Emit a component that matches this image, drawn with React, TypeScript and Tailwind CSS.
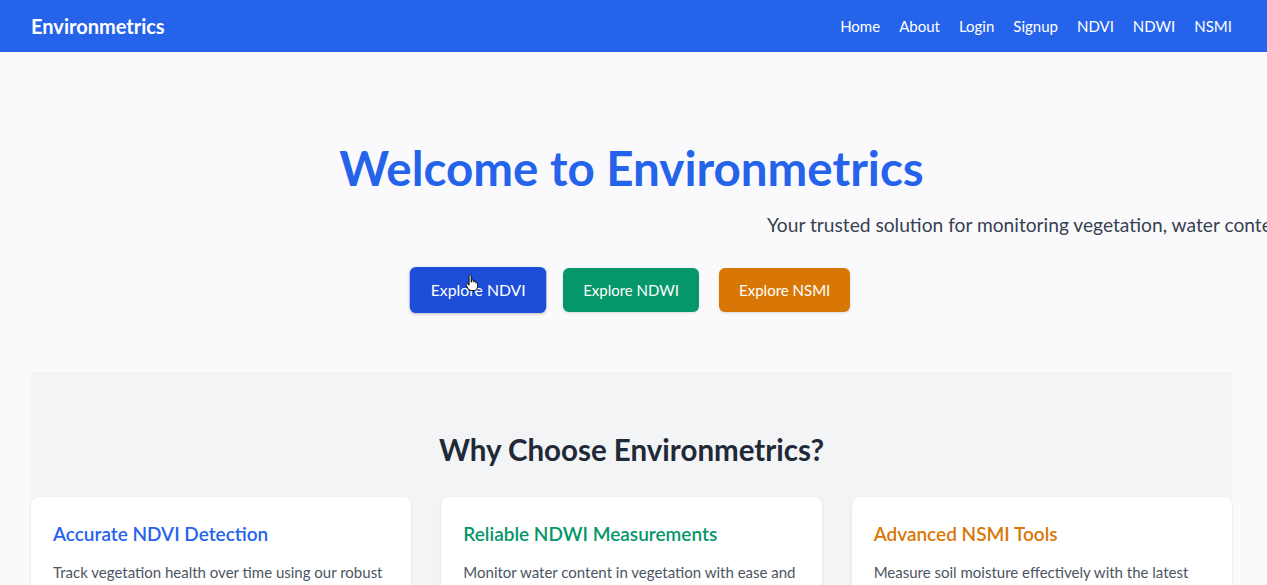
import React from "react";

const links = ["Home", "About", "Login", "Signup", "NDVI", "NDWI", "NSMI"];

const features = [
  {
    title: "Accurate NDVI Detection",
    color: "text-[#2563eb]",
    text: "Track vegetation health over time using our robust NDVI analysis tools powered by satellite imagery.",
  },
  {
    title: "Reliable NDWI Measurements",
    color: "text-[#059669]",
    text: "Monitor water content in vegetation with ease and precision using our NDWI measurement features.",
  },
  {
    title: "Advanced NSMI Tools",
    color: "text-[#d97706]",
    text: "Measure soil moisture effectively with the latest NSMI techniques for better land management.",
  },
];

const HandCursor = () => (
  <svg
    className="absolute left-[53px] top-[7px] pointer-events-none"
    width="12"
    height="17"
    viewBox="0 0 12 17"
  >
    <path
      d="M3.5 1.5a1 1 0 0 1 2 0v6h.5v-1.2a1 1 0 0 1 2 0v1.2a1 1 0 0 1 2 0v1a.9.9 0 0 1 1.6 0V12q0 3.5-3 3.5H5.5q-2 0-3-2L.8 10.3a1 1 0 0 1 1.6-1.1L3.5 10.5Z"
      fill="#fff"
      stroke="#000"
      strokeWidth="0.9"
      strokeLinejoin="round"
    />
  </svg>
);

export default function App() {
  return (
    <div
      className="min-h-screen bg-[#fafafc] overflow-x-hidden"
      style={{ fontFamily: 'Lato, "Noto Sans", sans-serif' }}
    >
      <nav className="bg-[#2563eb] h-[52px] flex items-center justify-between pl-[31px] pr-[35px]">
        <span className="text-white text-xl font-bold">Environmetrics</span>
        <ul className="flex gap-[19px] text-white text-[15px]">
          {links.map((l) => (
            <li key={l}>
              <a href="#">{l}</a>
            </li>
          ))}
        </ul>
      </nav>

      <main className="ml-[31px] mr-[35px]">
        <section className="pt-[92px] pb-[60px] text-center">
          <h1 className="text-[47.5px] font-bold text-[#2563eb] leading-[48px]">
            Welcome to Environmetrics
          </h1>
          <div className="mt-[19px] h-7 text-left whitespace-nowrap">
            <p className="inline-block ml-[736px] text-[19.2px] text-[#374151] leading-7">
              Your trusted solution for monitoring vegetation, water content, and soil moisture.
            </p>
          </div>
          <div className="mt-[29px] flex justify-center gap-5 text-[15px] leading-6">
            <button className="relative bg-[#1d4ed8] text-white px-5 py-2.5 rounded-md shadow scale-105">
              Explore NDVI
              <HandCursor />
            </button>
            <button className="bg-[#059669] text-white px-5 py-2.5 rounded-md shadow">
              Explore NDWI
            </button>
            <button className="bg-[#d97706] text-white px-5 py-2.5 rounded-md shadow">
              Explore NSMI
            </button>
          </div>
        </section>

        <section className="bg-[#f3f4f6] pt-[60px] pb-16">
          <h2 className="text-[29.5px] leading-9 font-bold text-[#1f2937] text-center">
            Why Choose Environmetrics?
          </h2>
          <div className="mt-[29px] grid grid-cols-3 gap-[30px]">
            {features.map((f) => (
              <div key={f.title} className="bg-white rounded-lg shadow-sm px-[22px] pt-[23px] pb-6">
                <h3 className={`text-[19px] leading-7 font-semibold ${f.color}`}>{f.title}</h3>
                <p className="mt-3 text-[15px] leading-6 text-[#4b5563]">{f.text}</p>
              </div>
            ))}
          </div>
        </section>
      </main>
    </div>
  );
}
